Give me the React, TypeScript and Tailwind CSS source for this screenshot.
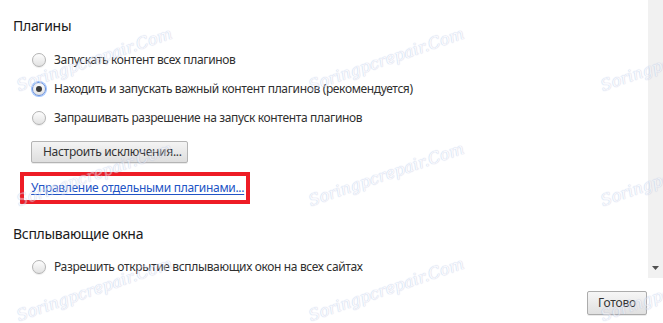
import React from "react";

const font = { fontFamily: '"Noto Sans", "Open Sans", sans-serif' };

function Radio({ checked = false }: { checked?: boolean }) {
  return (
    <span
      className={
        "relative flex h-[14px] w-[14px] shrink-0 items-center justify-center rounded-full border bg-gradient-to-b from-[#fdfdfd] to-[#e2e2e2] " +
        (checked
          ? "border-[#6a8fd8] shadow-[0_0_0_1px_rgba(77,144,254,0.55)]"
          : "border-[#b3b3b3] shadow-[0_1px_1px_rgba(0,0,0,0.08)]")
      }
    >
      {checked && <span className="h-[6px] w-[6px] rounded-full bg-[#3a3a3a]" />}
    </span>
  );
}

function RadioRow({ label, checked }: { label: string; checked?: boolean }) {
  return (
    <div className="flex h-[29px] items-center gap-[8px] pl-[19px]">
      <Radio checked={checked} />
      <span className="whitespace-nowrap text-[12px] leading-[16px] tracking-[-0.35px] text-[#303030]">{label}</span>
    </div>
  );
}

function Watermark({ left, top }: { left: number; top: number }) {
  return (
    <span
      className="pointer-events-none absolute select-none whitespace-nowrap text-[16px] italic leading-none text-[#f3f5fc] [text-shadow:0_0_1px_#8f9fd2,0_0_1px_#8f9fd2] opacity-45"
      style={{
        left,
        top,
        fontFamily: '"DejaVu Serif", serif',
        transform: "rotate(-19deg)",
        transformOrigin: "left bottom",
      }}
    >
      Soringpcrepair.Com
    </span>
  );
}

export default function App() {
  const marks: { left: number; top: number }[] = [];
  for (const y of [78, 193, 308]) {
    for (const x of [20, 312, 604]) {
      marks.push({ left: x, top: y });
    }
  }
  return (
    <div className="relative flex h-[323px] w-[663px] flex-col overflow-hidden bg-white" style={font}>
      <div className="flex h-[278px]">
        <div className="flex flex-1 flex-col pl-[13px] pt-[16px]">
          <div className="h-[20px] whitespace-nowrap text-[14px] leading-[20px] tracking-[-0.3px] text-[#1a1a1a]">Плагины</div>
          <div className="mt-[9px] flex flex-col">
            <RadioRow label="Запускать контент всех плагинов" />
            <RadioRow label="Находить и запускать важный контент плагинов (рекомендуется)" checked />
            <RadioRow label="Запрашивать разрешение на запуск контента плагинов" />
          </div>
          <div className="mt-[9px] pl-[18px]">
            <button className="flex h-[22px] w-[157px] items-center whitespace-nowrap rounded-[2px] border border-[#b4b4b4] bg-gradient-to-b from-[#f4f4f4] to-[#dedede] pl-[11px] text-[12px] leading-[16px] tracking-[-0.3px] text-[#333] shadow-[0_1px_0_rgba(0,0,0,0.08)]">
              Настроить исключения...
            </button>
          </div>
          <div className="mt-[9px] pl-[7px]">
            <div className="flex h-[32px] w-[230px] items-center border-[4px] border-[#ee1c25] pl-[7px]">
              <span className="whitespace-nowrap text-[12px] leading-[16px] tracking-[-0.3px] text-[#2254c5] underline underline-offset-[2px]">
                Управление отдельными плагинами...
              </span>
            </div>
          </div>
          <div className="mt-[20px] h-[20px] whitespace-nowrap text-[14px] leading-[20px] tracking-[-0.3px] text-[#1a1a1a]">Всплывающие окна</div>
          <div className="mt-[8px]">
            <RadioRow label="Разрешить открытие всплывающих окон на всех сайтах" />
          </div>
        </div>
        <div className="flex w-[15px] flex-col items-center justify-end bg-[#f1f1f1] pb-[8px]">
          <svg width="7" height="4" viewBox="0 0 7 4">
            <path d="M0 0 H7 L3.5 4 Z" fill="#505050" />
          </svg>
        </div>
      </div>
      <div className="flex flex-1 items-start justify-end pr-[16px] pt-[13px]">
        <button className="flex h-[24px] w-[60px] items-center justify-center rounded-[2px] border border-[#acacac] bg-gradient-to-b from-[#f6f6f6] to-[#e0e0e0] text-[12px] leading-[16px] tracking-[-0.2px] text-[#333] shadow-[0_1px_0_rgba(0,0,0,0.08)]">
          Готово
        </button>
      </div>
      {marks.map((m, i) => (
        <Watermark key={i} left={m.left} top={m.top} />
      ))}
    </div>
  );
}
